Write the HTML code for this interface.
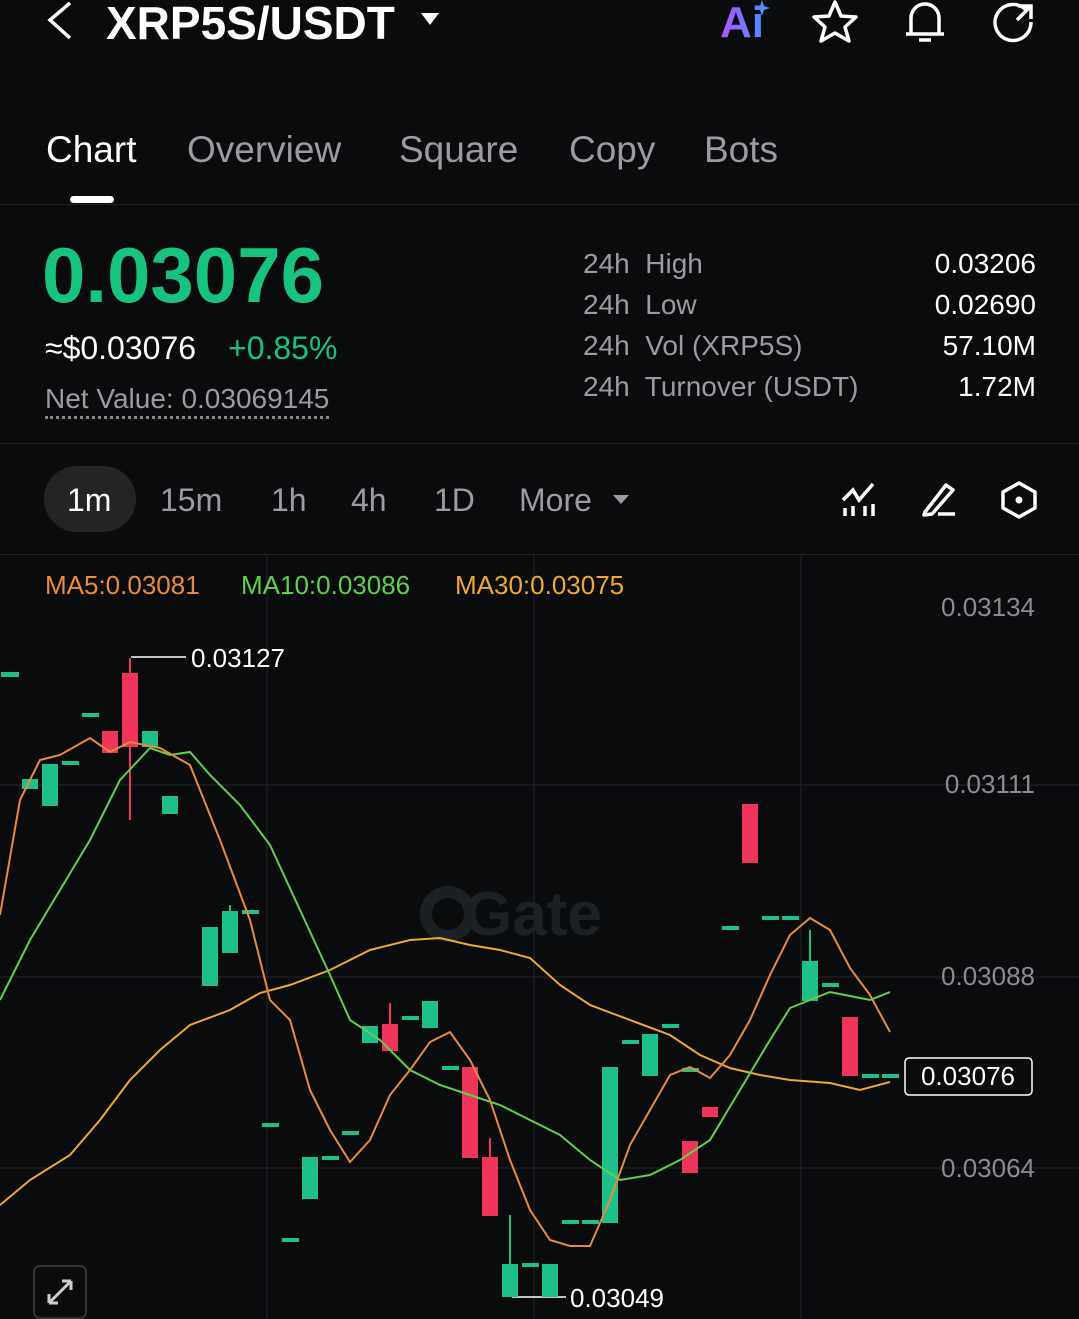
<!DOCTYPE html>
<html><head><meta charset="utf-8"><style>
*{margin:0;padding:0;box-sizing:border-box}
body{width:1079px;height:1319px;background:#0a0b0c;font-family:"Liberation Sans",sans-serif;overflow:hidden;position:relative;color:#fff}
.a{position:absolute;white-space:nowrap}
.g{color:#9a9ca0}
</style></head><body>
<svg class="a" style="left:0;top:0" width="1079" height="60">
<path d="M70 3 L50 20 L70 38" fill="none" stroke="#fff" stroke-width="3.5"/>
<path d="M421 13 L439 13 L430 25Z" fill="#fff"/>
<defs><linearGradient id="ai" x1="0" x2="1"><stop offset="0" stop-color="#b452ff"/><stop offset="1" stop-color="#4c8dff"/></linearGradient></defs>
<text x="720" y="37" font-size="44" font-weight="bold" fill="url(#ai)" font-family="Liberation Sans">Ai</text>
<path d="M762 0 l2 6 l6 2 l-6 2 l-2 6 l-2 -6 l-6 -2 l6 -2z" fill="#4c8dff"/>
<path d="M835 2 L841 16 L856 17 L845 27 L849 41 L835 33 L821 41 L825 27 L814 17 L829 16Z" fill="none" stroke="#fff" stroke-width="3.5" stroke-linejoin="round"/>
<path d="M906 34 h38 M911 34 V18 a14 14 0 0 1 28 0 V34 M919 40 h12" fill="none" stroke="#fff" stroke-width="3.5"/>
<path d="M1026 10 A18 18 0 1 0 1031 22 M1018 6 h13 v13 M1031 6 L1017 20" fill="none" stroke="#fff" stroke-width="3.5"/>
</svg>
<div class="a" style="left:106px;top:-4px;font-size:46px;font-weight:bold;letter-spacing:0px">XRP5S/USDT</div>
<div class="a" style="left:46px;top:129px;font-size:37px">Chart</div>
<div class="a g" style="left:187px;top:129px;font-size:37px">Overview</div>
<div class="a g" style="left:399px;top:129px;font-size:37px">Square</div>
<div class="a g" style="left:569px;top:129px;font-size:37px">Copy</div>
<div class="a g" style="left:704px;top:129px;font-size:37px">Bots</div>
<div class="a" style="left:70px;top:196px;width:44px;height:7px;border-radius:4px;background:#fff"></div>
<div class="a" style="left:0;top:204px;width:1079px;height:1px;background:#222"></div>
<div class="a" style="left:42px;top:230px;font-size:78px;font-weight:bold;color:#18c27f;letter-spacing:0px">0.03076</div>
<div class="a" style="left:45px;top:330px;font-size:32px">≈$0.03076</div>
<div class="a" style="left:228px;top:330px;font-size:32px;color:#18c27f">+0.85%</div>
<div class="a g" style="left:45px;top:383px;font-size:28px;border-bottom:3px dotted #888;padding-bottom:1px">Net Value: 0.03069145</div>
<div class="a g" style="left:583px;top:243px;font-size:28px;line-height:41px">24h&nbsp; High<br>24h&nbsp; Low<br>24h&nbsp; Vol (XRP5S)<br>24h&nbsp; Turnover (USDT)</div>
<div class="a" style="right:43px;top:243px;font-size:28px;line-height:41px;text-align:right">0.03206<br>0.02690<br>57.10M<br>1.72M</div>
<div class="a" style="left:0;top:443px;width:1079px;height:1px;background:#222"></div>
<div class="a" style="left:44px;top:466px;width:92px;height:66px;border-radius:33px;background:#222426"></div>
<div class="a" style="left:67px;top:482px;font-size:32px">1m</div>
<div class="a g" style="left:160px;top:482px;font-size:32px">15m</div>
<div class="a g" style="left:271px;top:482px;font-size:32px">1h</div>
<div class="a g" style="left:351px;top:482px;font-size:32px">4h</div>
<div class="a g" style="left:434px;top:482px;font-size:32px">1D</div>
<div class="a g" style="left:519px;top:482px;font-size:32px">More</div>
<svg class="a" style="left:0;top:470px" width="1079" height="60">
<path d="M613 25 h16 l-8 9z" fill="#9a9ca0"/>
<path d="M845 46 v-8 M853 46 v-10 M865 46 v-10 M873 46 v-12 M843 30 l10 -10 l6 10 l14 -16" fill="none" stroke="#fff" stroke-width="3.5"/>
<path d="M925 42 L946 15 L953 20 L932 44 L924 45Z M938 44 h17" fill="none" stroke="#fff" stroke-width="3.5" stroke-linejoin="round"/>
<path d="M1019 13 L1035 22 V38 L1019 47 L1003 38 V22Z" fill="none" stroke="#fff" stroke-width="3.5" stroke-linejoin="round"/>
<circle cx="1019" cy="30" r="3.5" fill="#fff"/>
</svg>
<div class="a" style="left:0;top:554px;width:1079px;height:1px;background:#222"></div>
<svg class="a" style="left:0;top:555px" width="1079" height="764" viewBox="0 555 1079 764">
<g stroke="#1b1d20" stroke-width="1.5">
<path d="M267 555 V1319 M534 555 V1319 M801 555 V1319 M0 785 H1079 M0 977 H1079 M0 1168 H1079"/>
</g>
<text x="533" y="935" font-size="62" font-weight="bold" fill="#1d2022" text-anchor="middle" font-family="Liberation Sans">Gate</text>
<circle cx="448" cy="914" r="22" fill="none" stroke="#1d2022" stroke-width="12"/>
<g font-size="26" font-family="Liberation Sans">
<text x="45" y="594" fill="#e88b3a">MA5:0.03081</text>
<text x="241" y="594" fill="#5fd14a">MA10:0.03086</text>
<text x="455" y="594" fill="#f0a830">MA30:0.03075</text>
<g fill="#8a8c90"><text x="1035" y="616" text-anchor="end">0.03134</text><text x="1035" y="793" text-anchor="end">0.03111</text><text x="1035" y="985" text-anchor="end">0.03088</text><text x="1035" y="1177" text-anchor="end">0.03064</text></g>
<text x="191" y="667" fill="#fff">0.03127</text>
<text x="570" y="1307" fill="#fff">0.03049</text>
</g>
<path d="M131 657 H186 M512 1297 H566" stroke="#fff" stroke-width="1.5"/>
<g fill="#1ec08a" stroke="#1ec08a" stroke-width="2">
<rect x="2" y="673" width="16" height="3"/><rect x="23" y="780" width="14" height="8"/><rect x="43" y="765" width="14" height="40"/><rect x="63" y="762" width="15" height="2"/><rect x="83" y="714" width="15" height="2"/>
<rect x="143" y="732" width="14" height="14"/><rect x="163" y="797" width="14" height="16"/>
<path d="M230 905 V912"/><rect x="203" y="928" width="14" height="57"/><rect x="223" y="912" width="14" height="40"/><rect x="243" y="911" width="15" height="2"/>
<rect x="263" y="1124" width="15" height="2"/><rect x="283" y="1239" width="15" height="2"/><rect x="303" y="1158" width="14" height="40"/><rect x="323" y="1157" width="15" height="2"/><rect x="343" y="1132" width="15" height="2"/>
<rect x="363" y="1027" width="14" height="15"/><rect x="403" y="1017" width="15" height="2"/><rect x="423" y="1002" width="14" height="25"/><rect x="443" y="1067" width="15" height="2"/>
<path d="M510 1215 V1265"/><rect x="503" y="1265" width="14" height="31"/><rect x="523" y="1264" width="15" height="2"/><rect x="543" y="1265" width="14" height="31"/>
<rect x="563" y="1221" width="15" height="2"/><rect x="583" y="1221" width="15" height="2"/><rect x="603" y="1068" width="14" height="154"/><rect x="623" y="1041" width="15" height="2"/><rect x="643" y="1035" width="14" height="40"/><rect x="663" y="1025" width="15" height="2"/><rect x="683" y="1069" width="15" height="2"/>
<rect x="723" y="927" width="15" height="2"/><rect x="763" y="917" width="15" height="2"/><rect x="783" y="917" width="15" height="2"/>
<path d="M810 930 V962"/><rect x="803" y="962" width="14" height="38"/><rect x="823" y="984" width="15" height="2"/><rect x="863" y="1075" width="15" height="2"/><rect x="883" y="1075" width="15" height="2"/>
</g>
<g fill="#f0355a" stroke="#f0355a" stroke-width="2">
<rect x="103" y="732" width="14" height="20"/><path d="M130 658 V820"/><rect x="123" y="674" width="14" height="72"/>
<path d="M390 1003 V1025"/><rect x="383" y="1025" width="14" height="25"/>
<rect x="463" y="1068" width="14" height="89"/><path d="M490 1138 V1158"/><rect x="483" y="1158" width="14" height="57"/>
<rect x="703" y="1108" width="14" height="8"/><rect x="683" y="1142" width="14" height="30"/><rect x="743" y="805" width="14" height="57"/><rect x="843" y="1018" width="14" height="57"/>
</g>
<g fill="none" stroke-width="2">
<polyline stroke="#f0a830" points="0,1205 30,1180 70,1155 100,1120 130,1080 160,1050 190,1025 230,1010 260,993 290,985 330,970 370,950 410,940 440,938 470,945 500,950 530,958 560,985 590,1005 630,1020 670,1035 700,1055 730,1068 760,1075 790,1080 830,1083 860,1090 890,1082"/>
<polyline stroke="#5fd14a" points="0,1000 30,940 60,890 90,840 120,780 150,748 170,755 190,752 210,775 240,805 270,845 300,910 330,975 350,1020 380,1040 410,1070 440,1085 470,1095 500,1105 530,1120 560,1135 590,1160 620,1180 650,1175 680,1160 710,1140 740,1090 770,1040 790,1008 830,992 870,1000 890,992"/>
<polyline stroke="#e88b3a" points="0,915 20,800 40,760 60,755 90,738 110,752 130,742 160,748 190,765 220,840 250,920 270,1000 290,1020 310,1090 330,1130 350,1162 370,1140 390,1095 410,1070 430,1042 450,1032 470,1060 490,1100 510,1160 530,1210 550,1240 570,1246 590,1246 610,1200 630,1145 650,1110 670,1075 690,1067 710,1078 730,1055 750,1020 770,975 790,935 810,918 830,930 850,968 870,995 890,1032"/>
</g>
<rect x="905" y="1058" width="127" height="37" rx="4" fill="#0a0b0c" stroke="#fff" stroke-width="1.5"/>
<text x="968" y="1085" font-size="26" fill="#fff" text-anchor="middle" font-family="Liberation Sans">0.03076</text>
<rect x="34" y="1266" width="52" height="52" rx="6" fill="#0a0b0c" stroke="#333" stroke-width="2"/>
<path d="M49 1303 L71 1281 M49 1303 v-9 M49 1303 h9 M71 1281 v9 M71 1281 h-9" stroke="#ccc" stroke-width="3" fill="none"/>
</svg>
</body></html>
